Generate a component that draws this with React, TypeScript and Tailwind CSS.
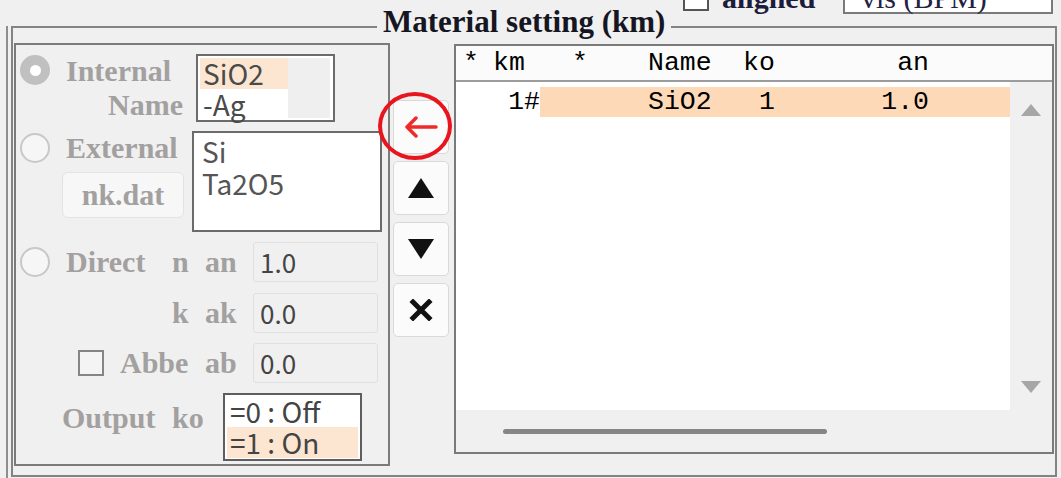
const label = "font-['Liberation_Serif',serif] font-bold text-[30px] leading-[34px] text-[#a3a0a0] whitespace-nowrap";
const gothic = "font-['Noto_Sans_CJK_JP',sans-serif]";
const mono = "font-['Liberation_Mono',monospace]";

function Radio({ checked }: { checked?: boolean }) {
  if (checked) {
    return (
      <div className="w-[30px] h-[30px] rounded-full bg-[#c0c0c0] flex items-center justify-center shrink-0">
        <div className="w-[11px] h-[11px] rounded-full bg-white" />
      </div>
    );
  }
  return <div className="w-[30px] h-[30px] rounded-full border-2 border-[#c8c8c8] bg-[#f6f6f6] shrink-0" />;
}

function NumBox({ value }: { value: string }) {
  return (
    <div className={`w-[125px] h-[40px] border border-[#e0e0e0] rounded-[3px] bg-[#f0f0f0] pl-[6px] flex items-center text-[26px] leading-none text-[#444] ${gothic}`}>
      {value}
    </div>
  );
}

function SideButton({ children }: { children: React.ReactNode }) {
  return (
    <div className="w-[56px] h-[54px] rounded-[5px] border border-[#d9d9d9] bg-[#fbfbfb] flex items-center justify-center">
      {children}
    </div>
  );
}

function LeftPanel() {
  return (
    <div className="ml-[1px] mt-[15px] w-[376px] h-[423px] border-2 border-[#7b7b7b] flex flex-col shrink-0">
      {/* internal */}
      <div className="h-[81px] flex items-start">
        <div className="ml-[4px] mt-[10px]">
          <Radio checked />
        </div>
        <div className={`ml-[16px] mt-[9px] w-[120px] ${label}`}>
          <div>Internal</div>
          <div className="pl-[42px]">Name</div>
        </div>
        <div className="ml-[10px] mt-[9px] w-[139px] h-[68px] border-2 border-[#6b6b6b] bg-white p-[2px] flex">
          <div className={`w-[88px] text-[28px] leading-[31px] text-[#4a4a4a] ${gothic}`}>
            <div className="bg-[#fce6d1] pl-[3px]">SiO2</div>
            <div className="pl-[3px]">-Ag</div>
          </div>
          <div className="flex-1 bg-[#efefef] mr-[1px]" />
        </div>
      </div>

      {/* external */}
      <div className="h-[110px] flex items-start">
        <div className="ml-[4px] mt-[7px]">
          <Radio />
        </div>
        <div className="ml-[12px] w-[124px] flex flex-col">
          <div className={`pl-[4px] mt-[5px] ${label}`}>External</div>
          <div className={`mt-[7px] w-[122px] h-[46px] rounded-[6px] border border-[#e3e3e3] bg-[#f7f7f7] flex items-center justify-center ${label}`}>
            nk.dat
          </div>
        </div>
        <div className={`ml-[6px] mt-[5px] w-[190px] h-[101px] border-2 border-[#6b6b6b] bg-white pl-[8px] pt-[2px] text-[28px] leading-[32px] text-[#555] ${gothic}`}>
          <div>Si</div>
          <div>Ta2O5</div>
        </div>
      </div>

      {/* direct */}
      <div className="h-[52px] flex items-center">
        <div className="ml-[4px]">
          <Radio />
        </div>
        <div className={`ml-[16px] w-[106px] ${label}`}>Direct</div>
        <div className={`w-[33px] ${label}`}>n</div>
        <div className={`w-[48px] ${label}`}>an</div>
        <NumBox value="1.0" />
      </div>

      <div className="h-[50px] flex items-center">
        <div className={`ml-[156px] w-[33px] ${label}`}>k</div>
        <div className={`w-[48px] ${label}`}>ak</div>
        <NumBox value="0.0" />
      </div>

      <div className="h-[50px] flex items-center">
        <div className="ml-[62px] w-[26px] h-[26px] border-2 border-[#858585] bg-[#f4f4f4] shrink-0" />
        <div className={`ml-[16px] w-[85px] ${label}`}>Abbe</div>
        <div className={`w-[48px] ${label}`}>ab</div>
        <NumBox value="0.0" />
      </div>

      {/* output */}
      <div className="flex-1 flex items-start">
        <div className={`ml-[46px] mt-[13px] w-[110px] ${label}`}>Output</div>
        <div className={`mt-[13px] w-[51px] ${label}`}>ko</div>
        <div className={`mt-[5px] w-[139px] h-[68px] border-2 border-[#5e5e5e] bg-white px-[2px] pt-[1px] text-[28px] leading-[31px] text-[#444] ${gothic}`}>
          <div className="pl-[3px] whitespace-pre">=0 : Off</div>
          <div className="pl-[3px] bg-[#fce6d1] whitespace-pre">=1 : On</div>
        </div>
      </div>
    </div>
  );
}

function ButtonColumn() {
  return (
    <div className="w-[64px] pl-[3px] pt-[72px] flex flex-col gap-[7px] shrink-0">
      <div className="relative">
        <SideButton>
          <svg width="34" height="22" viewBox="0 0 34 22">
            <path d="M3 11 H32 M12 2 L3 11 L12 20" stroke="#f02a2a" strokeWidth="3.5" fill="none" strokeLinecap="round" strokeLinejoin="round" />
          </svg>
        </SideButton>
        <div className="absolute -left-[15px] -top-[8px] w-[74px] h-[68px] rounded-[50%] border-[4px] border-[#e8141e] pointer-events-none" />
      </div>
      <SideButton>
        <svg width="28" height="22" viewBox="0 0 28 22">
          <path d="M14 1 L27 21 H1 Z" fill="#111" />
        </svg>
      </SideButton>
      <SideButton>
        <svg width="28" height="22" viewBox="0 0 28 22">
          <path d="M1 1 H27 L14 21 Z" fill="#111" />
        </svg>
      </SideButton>
      <SideButton>
        <svg width="24" height="22" viewBox="0 0 24 22">
          <path d="M4 3 L20 19 M20 3 L4 19" stroke="#111" strokeWidth="5" strokeLinecap="square" />
        </svg>
      </SideButton>
    </div>
  );
}

function MaterialTable() {
  return (
    <div className="mt-[16px] w-[600px] h-[410px] border-2 border-[#7a7a7a] flex flex-col shrink-0">
      <div className={`h-[36px] shrink-0 bg-[#fbfbfb] border-b-2 border-[#9c9c9c] flex items-center text-[26.5px] leading-none text-black ${mono}`}>
        <div className="w-[34px] pl-[7px]">*</div>
        <div className="w-[50px] pl-[3px]">km</div>
        <div className="w-[100px] pl-[32px]">*</div>
        <div className="w-[90px] pl-[8px]">Name</div>
        <div className="w-[60px] pl-[13px]">ko</div>
        <div className="w-[150px] text-right pr-[11px]">an</div>
      </div>
      <div className="h-[328px] flex shrink-0">
        <div className="flex-1 bg-white pt-[5px]">
          <div className={`h-[30px] flex items-center text-[26.5px] leading-none text-black ${mono}`}>
            <div className="w-[34px]" />
            <div className="w-[50px] text-right">1#</div>
            <div className="flex-1 h-full bg-[#fdd9b8] flex items-center">
              <div className="w-[100px]" />
              <div className="w-[90px] pl-[8px]">SiO2</div>
              <div className="w-[60px] text-right pr-[15px]">1</div>
              <div className="w-[150px] text-right pr-[11px]">1.0</div>
            </div>
          </div>
        </div>
        <div className="w-[42px] bg-[#f0f0f0] flex flex-col justify-between items-center pt-[22px] pb-[17px]">
          <svg width="20" height="12" viewBox="0 0 20 12">
            <path d="M10 0 L20 12 H0 Z" fill="#a6a6a6" />
          </svg>
          <svg width="20" height="12" viewBox="0 0 20 12">
            <path d="M0 0 H20 L10 12 Z" fill="#a6a6a6" />
          </svg>
        </div>
      </div>
      <div className="flex-1 bg-[#f0f0f0] flex items-center pl-[47px]">
        <div className="w-[324px] h-[5px] bg-[#868686] rounded-full" />
      </div>
    </div>
  );
}

export default function App() {
  return (
    <div className="w-[1061px] h-[478px] bg-[#f0f0f0] overflow-hidden flex flex-col">
      <div className="h-[26px] shrink-0">
        <div className="flex items-center h-[32px] -mt-[18px]">
          <div className="ml-[683px] w-[26px] h-[26px] border-2 border-[#555] bg-white shrink-0" />
          <div className="ml-[13px] w-[121px] font-['Liberation_Serif',serif] font-bold text-[30px] leading-[30px] text-[#1c1c3c]">
            aligned
          </div>
          <div className="w-[210px] h-[32px] border-2 border-[#7a7a7a] bg-white pl-[16px] flex items-center font-['Liberation_Serif',serif] text-[30px] leading-[30px] text-[#222244]">
            vis (BPM)
          </div>
        </div>
      </div>
      <div className="flex-1 pl-[6px] flex">
        <div className="border-l-2 border-[#8e8e8e] pl-[3px]">
          <div className="relative w-[1046px] h-[451px] border-2 border-[#838383] flex items-start">
            <div className="absolute left-[364px] -top-[22px] px-[6px] bg-[#f0f0f0] font-['Liberation_Serif',serif] font-bold text-[31px] leading-[31px] text-[#161622] whitespace-nowrap">
              Material setting (km)
            </div>
            <LeftPanel />
            <ButtonColumn />
            <MaterialTable />
          </div>
        </div>
      </div>
    </div>
  );
}
